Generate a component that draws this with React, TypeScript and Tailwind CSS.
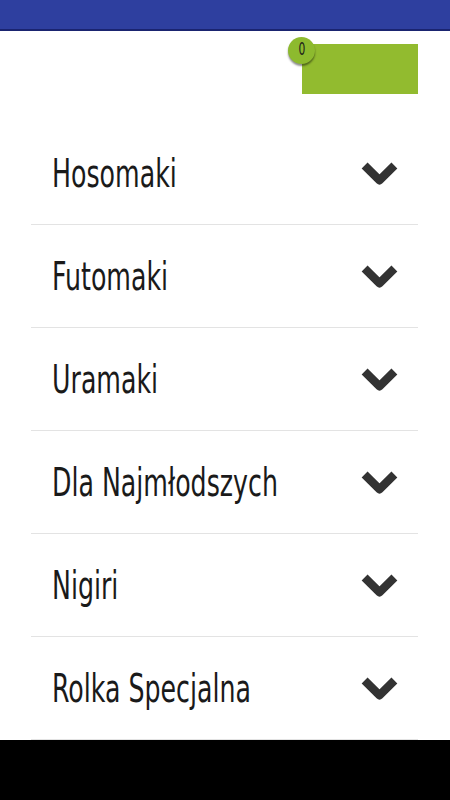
import React from "react";

const items = [
  "Hosomaki",
  "Futomaki",
  "Uramaki",
  "Dla Najmłodszych",
  "Nigiri",
  "Rolka Specjalna",
];

function Chevron() {
  return (
    <svg width="37" height="23" viewBox="0 0 37 23" className="shrink-0">
      <path
        d="M3.6 3.6 L18.5 18.2 L33.4 3.6"
        fill="none"
        stroke="#333333"
        strokeWidth="8.4"
        strokeLinejoin="round"
        strokeLinecap="butt"
      />
    </svg>
  );
}

export default function App() {
  return (
    <div
      className="h-[800px] w-[450px] flex flex-col bg-white overflow-hidden"
      style={{ fontFamily: '"DejaVu Sans Condensed", "DejaVu Sans", sans-serif' }}
    >
      <div className="h-[31px] shrink-0 bg-[#2e3f9f] border-b-2 border-[#1a2470]" />
      <div className="flex justify-end pr-[32px] pt-[13px] shrink-0">
        <div className="relative w-[116px] h-[50px] bg-[#92bb2f]">
          <div className="absolute -left-[14px] -top-[7px] w-[27px] h-[27px] rounded-full bg-[#8dba2e] shadow-[0_2px_2px_rgba(0,0,0,0.45)] flex items-center justify-center">
            <span className="inline-block text-[17px] leading-none text-[#1a1a1a] scale-x-[0.7] -mt-[2px]">0</span>
          </div>
        </div>
      </div>
      <div className="mt-[28px] ml-[31px] mr-[32px] shrink-0">
        {items.map((t) => (
          <div
            key={t}
            className="h-[103px] border-b border-[#e3e3e3] flex items-center pl-[21px] pr-[20px]"
          >
            <div className="flex-1 min-w-0">
              <span className="inline-block origin-left scale-x-[0.72] whitespace-nowrap text-[39px] text-[#1a1a1a] leading-none pt-[1px]">
                {t}
              </span>
            </div>
            <Chevron />
          </div>
        ))}
      </div>
      <div className="flex-1 bg-black" />
    </div>
  );
}
